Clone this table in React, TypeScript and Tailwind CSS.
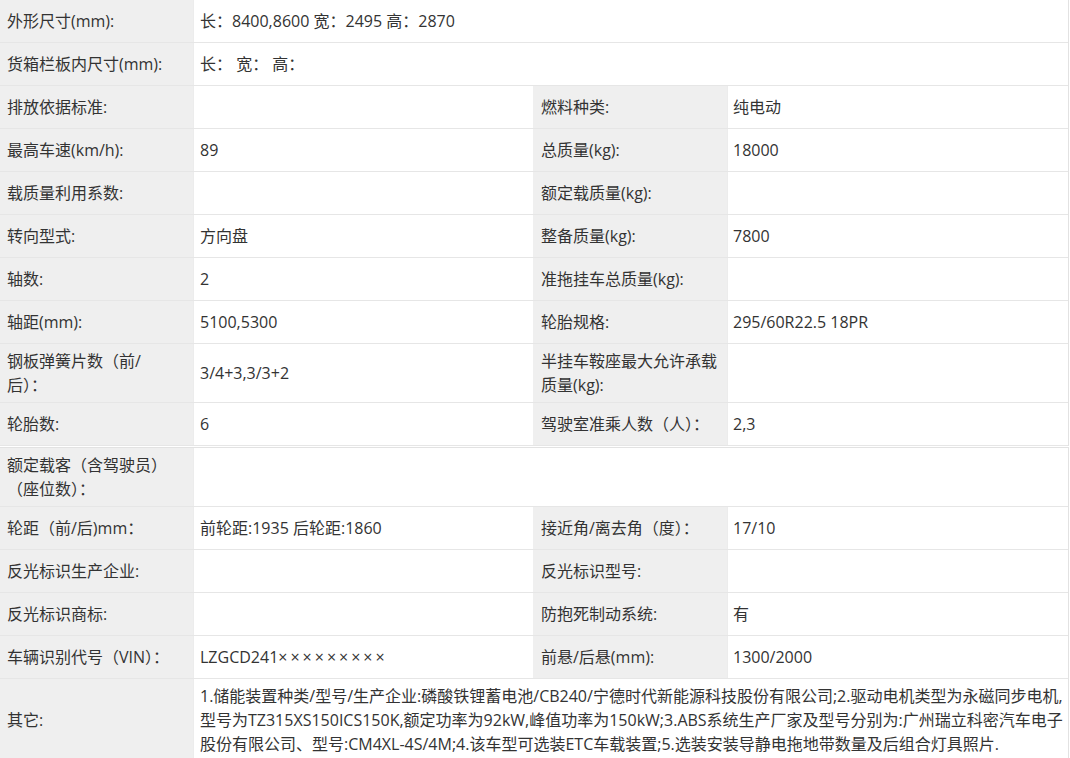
import React from "react";

type Pair = { label: React.ReactNode; value?: React.ReactNode };

interface Row {
  left: Pair;
  right?: Pair;
  wide?: boolean;
  multi?: boolean;
}

const topRows: Row[] = [
  { left: { label: "外形尺寸(mm):", value: "长：8400,8600 宽：2495 高：2870" }, wide: true },
  { left: { label: "货箱栏板内尺寸(mm):", value: "长：  宽：  高：" }, wide: true },
  { left: { label: "排放依据标准:" }, right: { label: "燃料种类:", value: "纯电动" } },
  { left: { label: "最高车速(km/h):", value: "89" }, right: { label: "总质量(kg):", value: "18000" } },
  { left: { label: "载质量利用系数:" }, right: { label: "额定载质量(kg):" } },
  { left: { label: "转向型式:", value: "方向盘" }, right: { label: "整备质量(kg):", value: "7800" } },
  { left: { label: "轴数:", value: "2" }, right: { label: "准拖挂车总质量(kg):" } },
  { left: { label: "轴距(mm):", value: "5100,5300" }, right: { label: "轮胎规格:", value: "295/60R22.5 18PR" } },
  {
    left: {
      label: (
        <>
          钢板弹簧片数（前/
          <br />
          后）：
        </>
      ),
      value: "3/4+3,3/3+2",
    },
    right: {
      label: (
        <>
          半挂车鞍座最大允许承载
          <br />
          质量(kg):
        </>
      ),
    },
    multi: true,
  },
  { left: { label: "轮胎数:", value: "6" }, right: { label: "驾驶室准乘人数（人）：", value: "2,3" } },
];

const bottomRows: Row[] = [
  {
    left: {
      label: (
        <>
          额定载客（含驾驶员）
          <br />
          （座位数）：
        </>
      ),
    },
    wide: true,
    multi: true,
  },
  { left: { label: "轮距（前/后)mm：", value: "前轮距:1935 后轮距:1860" }, right: { label: "接近角/离去角（度）：", value: "17/10" } },
  { left: { label: "反光标识生产企业:" }, right: { label: "反光标识型号:" } },
  { left: { label: "反光标识商标:" }, right: { label: "防抱死制动系统:", value: "有" } },
  {
    left: {
      label: "车辆识别代号（VIN）：",
      value: (
        <>
          LZGCD241<span className="tracking-[3px]">×××××××××</span>
        </>
      ),
    },
    right: { label: "前悬/后悬(mm):", value: "1300/2000" },
  },
  {
    left: {
      label: "其它:",
      value: (
        <>
          1.储能装置种类/型号/生产企业:磷酸铁锂蓄电池/CB240/宁德时代新能源科技股份有限公司;2.驱动电机类型为永磁同步电机,
          <br />
          型号为TZ315XS150ICS150K,额定功率为92kW,峰值功率为150kW;3.ABS系统生产厂家及型号分别为:广州瑞立科密汽车电子
          <br />
          股份有限公司、型号:CM4XL-4S/4M;4.该车型可选装ETC车载装置;5.选装安装导静电拖地带数量及后组合灯具照片.
        </>
      ),
    },
    wide: true,
    multi: true,
  },
];

function SpecRow({ row }: { row: Row }) {
  const pad = row.multi ? "py-[5px]" : "";
  return (
    <div className={`flex border-b border-[#e6e6e6] ${row.multi ? "min-h-[59px]" : "h-[43px]"}`}>
      <div className={`w-[193px] shrink-0 bg-[#efefef] px-[7px] flex items-center ${pad}`}>
        <span>{row.left.label}</span>
      </div>
      {row.wide ? (
        <div className={`flex-1 bg-white pl-[6px] pr-[2px] flex items-center border-l border-[#ececec] whitespace-nowrap ${pad}`}>
          <span>{row.left.value}</span>
        </div>
      ) : (
        <>
          <div className={`w-[340px] shrink-0 bg-white px-[6px] flex items-center border-l border-[#ececec] ${pad}`}>
            <span>{row.left.value}</span>
          </div>
          <div className={`w-[194px] shrink-0 bg-[#efefef] px-[8px] flex items-center ${pad}`}>
            <span>{row.right?.label}</span>
          </div>
          <div className={`flex-1 bg-white px-[5px] flex items-center border-l border-[#ececec] ${pad}`}>
            <span>{row.right?.value}</span>
          </div>
        </>
      )}
    </div>
  );
}

export default function App() {
  return (
    <div
      className="w-[1070px] h-[758px] overflow-hidden bg-white text-[16px] leading-[24px] text-[#333]"
      style={{ fontFamily: '"Open Sans", "Noto Sans CJK SC", sans-serif' }}
    >
      <div className="w-[1069px] border-r border-[#e2e2e2]">
        {topRows.map((r, i) => (
          <SpecRow key={i} row={r} />
        ))}
      </div>
      <div className="w-[1069px] mt-px border-t border-r border-[#e2e2e2]">
        {bottomRows.map((r, i) => (
          <SpecRow key={i} row={r} />
        ))}
      </div>
    </div>
  );
}
